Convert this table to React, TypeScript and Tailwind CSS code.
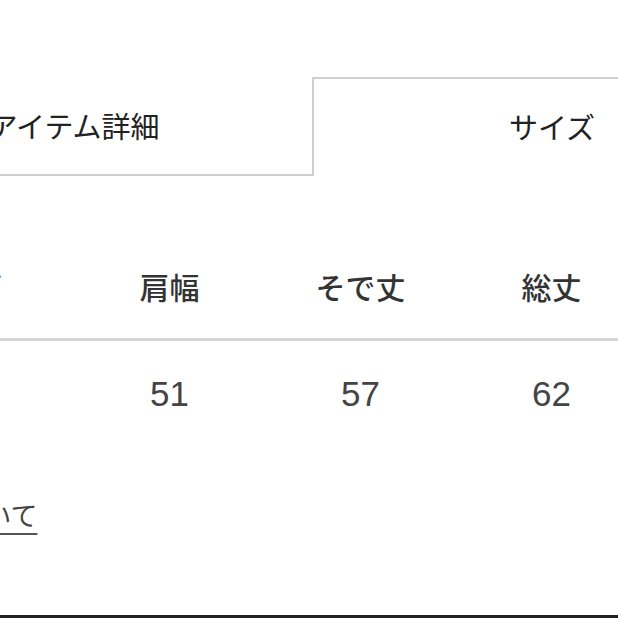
import React from "react";

const jp = { fontFamily: '"Noto Sans CJK JP", "Noto Sans", sans-serif' };
const num = { fontFamily: '"Liberation Sans", "Noto Sans", sans-serif' };

export default function App() {
  return (
    <div className="w-[618px] h-[618px] overflow-hidden bg-white flex flex-col" style={jp}>
      {/* tabs */}
      <div className="flex ml-[-164px] w-[956px] mt-[77px] h-[99px] shrink-0">
        <div className="w-[476px] shrink-0 h-full border-b-2 border-[#cfcfcf] flex items-center justify-center text-[29px] text-[#222] leading-none">
          アイテム詳細
        </div>
        <div className="w-[480px] shrink-0 h-full border-t-2 border-l-2 border-r-2 border-[#cfcfcf] flex items-center justify-center text-[29px] text-[#222] leading-none pb-[2px]">
          サイズ
        </div>
      </div>

      {/* table */}
      <div className="flex flex-col ml-[-117px] w-[960px] mt-[58px] shrink-0">
        <div className="flex h-[107px] items-center border-b-[3px] border-[#d6d6d6] text-[30px] font-medium text-[#333] leading-none">
          <div className="w-[191px] shrink-0 pl-[30px]">サイズ</div>
          <div className="w-[191px] shrink-0 text-center">肩幅</div>
          <div className="w-[191px] shrink-0 text-center">そで丈</div>
          <div className="w-[191px] shrink-0 text-center">総丈</div>
          <div className="w-[191px] shrink-0 text-center">着丈</div>
        </div>
        <div className="flex h-[100px] items-center pt-[5px] text-[35px] text-[#444] leading-none" style={num}>
          <div className="w-[191px] shrink-0 pl-[30px]">F</div>
          <div className="w-[191px] shrink-0 text-center">51</div>
          <div className="w-[191px] shrink-0 text-center">57</div>
          <div className="w-[191px] shrink-0 text-center">62</div>
          <div className="w-[191px] shrink-0 text-center"></div>
        </div>
      </div>

      {/* link */}
      <div className="flex mt-[53px] ml-[-150px] h-[40px] items-center shrink-0">
        <a className="text-[27px] text-[#444] leading-none underline underline-offset-[7px] decoration-[2px] decoration-[#555] whitespace-nowrap">
          サイズについて
        </a>
      </div>

      <div className="flex-1" />
      <div className="h-[3px] bg-[#222] shrink-0" />
    </div>
  );
}
